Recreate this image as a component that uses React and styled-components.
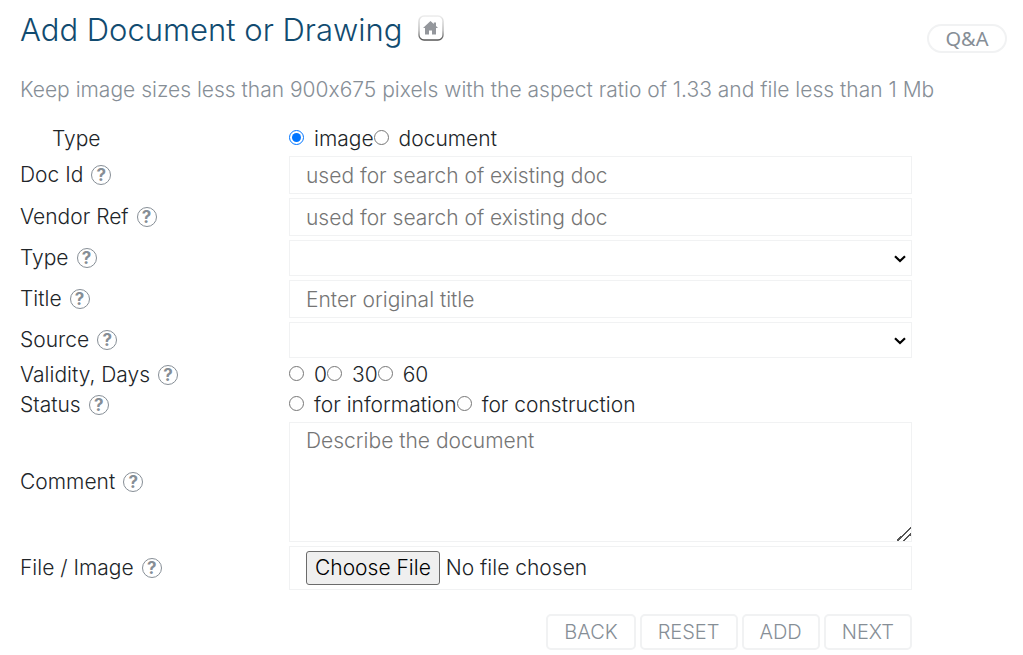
import styled, { createGlobalStyle } from "styled-components";

const App = () => {
  return (
    <>
      <GlobalStyle />
      <Page>
        <Header>
          <Title>Add Document or Drawing</Title>
          <HomeLink href="#home" aria-label="Home">
            <HomeIcon />
          </HomeLink>
          <QaButton type="button">Q&amp;A</QaButton>
        </Header>
        <Hint>
          Keep image sizes less than 900x675 pixels with the aspect ratio of 1.33 and file less than 1 Mb
        </Hint>

        <Form onSubmit={(e) => e.preventDefault()}>
          <Row role="radiogroup" aria-labelledby="kind">
            <Label as="span" id="kind" $indent>Type</Label>
            <Radios name="kind" options={["image", "document"]} selected="image" />
          </Row>
          <Row>
            <FieldLabel id="docId" text="Doc Id" />
            <Input id="docId" type="text" placeholder="used for search of existing doc" />
          </Row>
          <Row>
            <FieldLabel id="vendorRef" text="Vendor Ref" />
            <Input id="vendorRef" type="text" placeholder="used for search of existing doc" />
          </Row>
          <Row>
            <FieldLabel id="docType" text="Type" />
            <Dropdown id="docType" />
          </Row>
          <Row>
            <FieldLabel id="title" text="Title" />
            <Input id="title" type="text" placeholder="Enter original title" />
          </Row>
          <Row>
            <FieldLabel id="source" text="Source" />
            <Dropdown id="source" />
          </Row>
          <Row role="radiogroup" aria-labelledby="validity">
            <FieldLabel group id="validity" text="Validity, Days" />
            <Radios name="validity" options={["0", "30", "60"]} />
          </Row>
          <Row role="radiogroup" aria-labelledby="status">
            <FieldLabel group id="status" text="Status" />
            <Radios name="status" options={["for information", "for construction"]} />
          </Row>
          <Row>
            <FieldLabel id="comment" text="Comment" />
            <TextArea id="comment" placeholder="Describe the document" />
          </Row>
          <Row>
            <FieldLabel id="file" text="File / Image" />
            <FileInput id="file" type="file" />
          </Row>
          <Actions>
            <ActionButton type="button">BACK</ActionButton>
            <ActionButton type="reset">RESET</ActionButton>
            <ActionButton type="submit">ADD</ActionButton>
            <ActionButton type="button">NEXT</ActionButton>
          </Actions>
        </Form>
      </Page>
    </>
  );
};

export default App;

const FieldLabel = ({ id, text, group }) => (
  <LabelCell>
    {group ? <Label as="span" id={id}>{text}</Label> : <Label htmlFor={id}>{text}</Label>}
    <Help type="button" aria-label={`Help: ${text}`}>?</Help>
  </LabelCell>
);

const Radios = ({ name, options, selected }) => (
  <RadioGroup>
    {options.map((option) => (
      <RadioLabel key={option}>
        <Radio type="radio" name={name} value={option} defaultChecked={option === selected} />
        {option}
      </RadioLabel>
    ))}
  </RadioGroup>
);

const Dropdown = ({ id }) => (
  <SelectBox>
    <Select id={id} defaultValue="">
      <option value=""></option>
    </Select>
    <Chevron viewBox="0 0 12 8" aria-hidden="true">
      <path d="M1 1.2 6 6 11 1.2" fill="none" stroke="#000" strokeWidth="2.2" />
    </Chevron>
  </SelectBox>
);

const HomeIcon = () => (
  <svg width="26" height="26" viewBox="0 0 26 26" aria-hidden="true">
    <defs>
      <linearGradient id="edge" x1="0" y1="0" x2="0" y2="1">
        <stop offset="0" stopColor="#ececec" />
        <stop offset="0.6" stopColor="#b4b4b4" />
        <stop offset="1" stopColor="#555" />
      </linearGradient>
    </defs>
    <rect x="1" y="1" width="24" height="24" rx="5" fill="#fff" stroke="url(#edge)" strokeWidth="1.4" />
    <path d="M12.500 6 5 13h2v6.500h4v-4h3v4h4V13h2l-2-2V7.500h-2.200v1.600z" fill="#94979c" />
  </svg>
);

const GlobalStyle = createGlobalStyle`
  * {
    box-sizing: border-box;
  }

  body {
    margin: 0;
    background: #fff;
    color: #212529;
    font-family: Inter, "Liberation Sans", sans-serif;
    font-size: 21px;
    font-weight: 300;
    font-variant-ligatures: no-contextual;
    line-height: 30px;
  }

  button, input, select, textarea {
    font: inherit;
  }
`;

const Page = styled.main`
  padding: 6px 16px 0 20px;
`;

const Header = styled.header`
  display: flex;
  align-items: center;
`;

const Title = styled.h1`
  margin: 0;
  color: #114b70;
  font-size: 31px;
  font-weight: 300;
  line-height: 40px;
`;

const HomeLink = styled.a`
  display: flex;
  margin: 0 auto 4px 16px;
`;

const QaButton = styled.button`
  width: 80px;
  height: 29px;
  margin-top: 18px;
  padding: 0;
  border: 2px solid #f1f2f3;
  border-radius: 15px;
  background: #fff;
  color: #868e96;
  font-family: "Noto Sans", sans-serif;
  font-size: 20px;
  font-weight: 400;
  line-height: 25px;
`;

const Hint = styled.p`
  margin: 22px 0 19px;
  color: #868e96;
`;

const Form = styled.form`
  margin-right: 95px;
`;

const Row = styled.div`
  display: grid;
  grid-template-columns: 269px 1fr;
  align-items: center;
`;

const LabelCell = styled.div`
  display: flex;
  align-items: center;
  gap: 8px;
`;

const Label = styled.label`
  padding-left: ${({ $indent }) => ($indent ? "32px" : "0")};
`;

const Help = styled.button`
  width: 20px;
  height: 20px;
  padding: 0;
  border: 1px solid #868e96;
  border-radius: 50%;
  background: #fff;
  color: #868e96;
  font-size: 17px;
  font-weight: 700;
  line-height: 18px;
`;

const RadioGroup = styled.div`
  display: flex;
`;

const RadioLabel = styled.label`
  display: flex;
  align-items: center;
`;

const Radio = styled.input`
  width: 15px;
  height: 15px;
  margin: 0 10px 3px 0;
`;

const Input = styled.input`
  width: 100%;
  height: 38px;
  margin: 2px 0;
  padding: 0 16px;
  border: 1px solid #f1f2f3;
  background: #fff;
  color: #212529;

  &::placeholder {
    color: #757575;
  }
`;

const SelectBox = styled.div`
  position: relative;
  margin: 2px 0;
`;

const Select = styled.select`
  display: block;
  width: 100%;
  height: 36px;
  padding: 0 16px;
  border: 1px solid #f1f2f3;
  border-radius: 0;
  background: #fff;
  color: #212529;
  appearance: none;
`;

/* arrow over the right end of the select */
const Chevron = styled.svg`
  position: absolute;
  top: 15px;
  right: 6px;
  width: 12px;
  height: 8px;
  pointer-events: none;
`;

const TextArea = styled.textarea`
  display: block;
  width: 100%;
  height: 120px;
  margin: 2px 0;
  padding: 3px 16px;
  border: 1px solid #f1f2f3;
  background: #fff;
  color: #212529;
  resize: vertical;

  &::placeholder {
    color: #757575;
  }

  &::-webkit-resizer {
    background: linear-gradient(
      135deg,
      transparent 50%,
      #555 50% 58%,
      transparent 58% 72%,
      #555 72% 80%,
      transparent 80%
    );
  }
`;

const FileInput = styled.input`
  width: 100%;
  height: 44px;
  margin: 2px 0;
  padding: 4px 16px;
  border: 1px solid #f1f2f3;
  background: #fff;
  color: #212529;

  &::file-selector-button {
    height: 34px;
    margin-right: 6px;
    padding: 0 8px;
    border: 1px solid #6b6b6b;
    border-radius: 3px;
    background: #efefef;
    color: #000;
    font: inherit;
  }
`;

const Actions = styled.div`
  display: flex;
  justify-content: flex-end;
  gap: 4px;
  margin-top: 22px;
`;

const ActionButton = styled.button`
  height: 36px;
  padding: 0 16px;
  border: 2px solid #f1f2f3;
  border-radius: 5px;
  background: #fff;
  color: #868e96;
  font-size: 20px;
  line-height: 32px;
`;
